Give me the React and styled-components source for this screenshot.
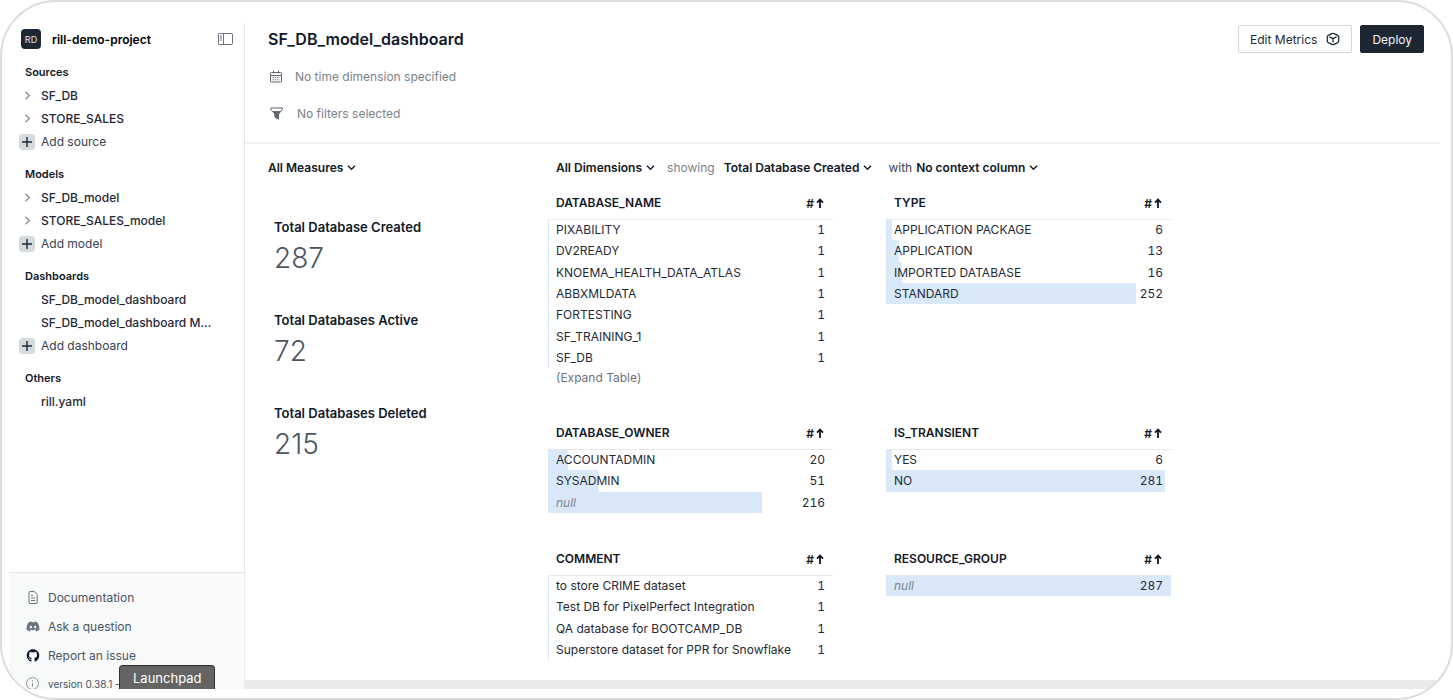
import styled, { createGlobalStyle } from "styled-components";
import { FaDiscord, FaGithub } from "react-icons/fa";

const Palette = {
  Font: `Inter, "Liberation Sans", sans-serif`,
  Ink: "#111827",
  Text: "#1f2937",
  Muted: "#4b5563",
  Faint: "#7b828d",
  Line: "#e5e7eb",
  Bar: "#dae9fa",
  Dark: "#1d2733",
};

const GlobalStyle = createGlobalStyle`
  * {
    box-sizing: border-box;
  }
  body {
    margin: 0;
    background-color: #fff;
    font-family: ${Palette.Font};
    font-size: 12px;
    color: ${Palette.Text};
  }
  button, select {
    font: inherit;
    color: inherit;
    cursor: pointer;
  }
`;

const Frame = styled.div`
  position: relative;
  display: flex;
  min-height: 100vh;
  padding: 21px 11px 9px 7px;
  border: 2px solid #dcdcdc;
  border-radius: 56px;
  overflow: hidden;
`;

const Sidebar = styled.aside`
  display: flex;
  flex-direction: column;
  flex: none;
  width: 236px;
  border-right: 1px solid ${Palette.Line};
`;

const ProjectBar = styled.header`
  display: flex;
  align-items: center;
  height: 32px;
  padding: 0 11px 0 12px;
`;

const ProjectBadge = styled.span`
  display: flex;
  align-items: center;
  justify-content: center;
  width: 20px;
  height: 20px;
  margin-right: 11px;
  border-radius: 4px;
  background-color: ${Palette.Dark};
  color: #e5e7eb;
  font-size: 9px;
`;

const ProjectName = styled.h1`
  flex: 1;
  margin: 0;
  font-size: 12px;
  font-weight: 600;
  color: #000;
`;

const IconButton = styled.button`
  display: flex;
  padding: 0;
  border: none;
  background: none;
`;

const Nav = styled.nav`
  display: flex;
  flex-direction: column;
  flex: 1;
  gap: 10px;
  padding-top: 6px;
`;

const SectionTitle = styled.h2`
  margin: 0;
  padding-left: 16px;
  font-size: 11px;
  line-height: 23px;
  font-weight: 600;
  color: ${Palette.Ink};
`;

const NavList = styled.ul`
  margin: 0;
  padding: 0;
  list-style: none;
`;

const NavItem = styled.li`
  display: flex;
  align-items: center;
  height: 23px;
  padding-left: 10px;
`;

const NavMarker = styled.span`
  display: flex;
  align-items: center;
  justify-content: center;
  flex: none;
  width: 16px;
  height: 16px;
  margin-right: 6px;
  border-radius: 4px;
  color: ${(props) => (props.$boxed ? Palette.Text : "#8b929c")};
  background-color: ${(props) => (props.$boxed ? "#d5dade" : "transparent")};
`;

const NavLink = styled.a`
  white-space: nowrap;
  text-decoration: none;
  font-weight: 500;
  color: ${Palette.Text};
`;

const AddButton = styled.button`
  display: flex;
  align-items: center;
  padding: 0;
  border: none;
  background: none;
  color: #374151;
`;

const SidebarFooter = styled.footer`
  display: flex;
  flex-direction: column;
  height: 117px;
  padding-top: 10px;
  overflow: hidden;
  border-top: 1px solid ${Palette.Line};
  background-color: #f8f9f9;
`;

const FooterLink = styled.a`
  display: flex;
  align-items: center;
  flex: none;
  gap: 8px;
  height: 29px;
  padding-left: 17px;
  text-decoration: none;
  color: ${Palette.Muted};

  svg {
    width: 14px;
    height: 13px;
  }
`;

const Version = styled.p`
  display: flex;
  align-items: center;
  flex: none;
  gap: 9px;
  height: 27px;
  margin: 0;
  padding-left: 17px;
  font-size: 10px;
  color: ${Palette.Muted};
`;

const DockTooltip = styled.div`
  position: absolute;
  left: 117px;
  bottom: 9px;
  height: 24px;
  padding: 0 13px;
  border: 1px solid #2f2f2f;
  border-bottom: none;
  border-radius: 4px 4px 0 0;
  background-color: #646464;
  color: #fff;
  font-size: 13px;
  line-height: 25px;
`;

const Main = styled.main`
  display: flex;
  flex-direction: column;
  flex: 1;
  border-bottom: 9px solid #e9eaeb;
`;

const PageHeader = styled.header`
  padding: 0 16px 10px 23px;
  border-bottom: 2px solid #f0f0f1;
`;

const TitleRow = styled.div`
  display: flex;
  align-items: center;
  justify-content: space-between;
  height: 32px;
  margin-bottom: 3px;
`;

const PageTitle = styled.h2`
  margin: 0;
  font-size: 16px;
  font-weight: 600;
  color: ${Palette.Ink};
`;

const Actions = styled.div`
  display: flex;
  gap: 8px;
`;

const ActionButton = styled.button`
  display: flex;
  align-items: center;
  gap: 9px;
  height: 28px;
  padding: 0 11px;
  border: 1px solid ${(props) => (props.$primary ? Palette.Dark : "#d1d5db")};
  border-radius: 2px;
  background-color: ${(props) => (props.$primary ? Palette.Dark : "#fff")};
  color: ${(props) => (props.$primary ? "#f3f4f6" : Palette.Text)};
`;

const StatusRow = styled.div`
  display: flex;
  align-items: center;
  gap: 12px;
  height: 37px;
  padding-left: 1px;
  color: ${Palette.Faint};
`;

const Content = styled.div`
  display: flex;
  padding-left: 23px;
`;

const Measures = styled.section`
  flex: none;
  width: 280px;
`;

const Toolbar = styled.div`
  display: flex;
  align-items: center;
  height: 43px;
  padding: 4px 0 0 ${(props) => (props.$indent ? "8px" : "0")};
`;

const Picker = styled.label`
  display: flex;
  align-items: center;
  gap: 4px;
  margin-right: ${(props) => (props.$muted ? "16px" : "12px")};
  color: ${(props) => (props.$muted ? Palette.Faint : "#374151")};

  svg {
    color: ${Palette.Ink};
  }
`;

const PickerSelect = styled.select`
  appearance: none;
  field-sizing: content;
  padding: 0;
  margin-left: ${(props) => (props.$spaced ? "5px" : "0")};
  border: none;
  background: none;
  font-weight: 600;
  color: ${Palette.Ink};
`;

const MeasureList = styled.dl`
  margin: 0;
  padding: 28px 0 0 6px;
`;

const Measure = styled.div`
  height: 93px;
`;

const MeasureName = styled.dt`
  font-size: 13px;
  line-height: 24px;
  font-weight: 600;
  color: ${Palette.Ink};
`;

const MeasureValue = styled.dd`
  margin: 0;
  font-size: 28px;
  line-height: 38px;
  font-weight: 300;
  color: ${Palette.Muted};
`;

const Leaderboards = styled.div`
  display: grid;
  grid-template-columns: 285px 285px;
  align-items: start;
  gap: 30px 53px;
`;

const Table = styled.table`
  width: 100%;
  table-layout: fixed;
  border-collapse: collapse;
`;

const HeadCell = styled.th`
  width: ${(props) => (props.$right ? "44px" : "auto")};
  height: 32px;
  padding: 0 9px 0 8px;
  border-bottom: 1px solid ${Palette.Line};
  text-align: ${(props) => (props.$right ? "right" : "left")};
  font-weight: 600;
  color: ${Palette.Ink};
`;

const SortButton = styled.button`
  display: inline-flex;
  align-items: center;
  gap: 2px;
  padding: 0;
  border: none;
  background: none;
  vertical-align: middle;
`;

const BarRow = styled.tr`
  height: 21px;
  background-image: linear-gradient(${Palette.Bar}, ${Palette.Bar});
  background-repeat: no-repeat;

  &:nth-child(3n + 2) {
    height: 22px;
  }
`;

const Cell = styled.td`
  padding: 0 8px;
  line-height: 16px;
  white-space: nowrap;
  text-align: ${(props) => (props.$right ? "right" : "left")};
  font-variant-numeric: ${(props) => (props.$right ? "tabular-nums" : "normal")};
  font-style: ${(props) => (props.$empty ? "italic" : "normal")};
  color: ${(props) => (props.$empty ? Palette.Faint : Palette.Text)};
`;

const ExpandButton = styled.button`
  display: block;
  padding: 0 8px;
  border: none;
  background: none;
  line-height: 19px;
  color: #6b7280;
`;

const TOTAL = 287;

const sections = [
  { title: "Sources", items: ["SF_DB", "STORE_SALES"], expandable: true, add: "Add source" },
  { title: "Models", items: ["SF_DB_model", "STORE_SALES_model"], expandable: true, add: "Add model" },
  {
    title: "Dashboards",
    items: ["SF_DB_model_dashboard", "SF_DB_model_dashboard M..."],
    add: "Add dashboard",
  },
  { title: "Others", items: ["rill.yaml"] },
];

const measures = [
  { name: "Total Database Created", value: 287 },
  { name: "Total Databases Active", value: 72 },
  { name: "Total Databases Deleted", value: 215 },
];

const leaderboards = [
  {
    name: "DATABASE_NAME",
    expandable: true,
    rows: [
      ["PIXABILITY", 1],
      ["DV2READY", 1],
      ["KNOEMA_HEALTH_DATA_ATLAS", 1],
      ["ABBXMLDATA", 1],
      ["FORTESTING", 1],
      ["SF_TRAINING_1", 1],
      ["SF_DB", 1],
    ],
  },
  {
    name: "TYPE",
    rows: [
      ["APPLICATION PACKAGE", 6],
      ["APPLICATION", 13],
      ["IMPORTED DATABASE", 16],
      ["STANDARD", 252],
    ],
  },
  {
    name: "DATABASE_OWNER",
    rows: [
      ["ACCOUNTADMIN", 20],
      ["SYSADMIN", 51],
      [null, 216],
    ],
  },
  {
    name: "IS_TRANSIENT",
    rows: [
      ["YES", 6],
      ["NO", 281],
    ],
  },
  {
    name: "COMMENT",
    rows: [
      ["to store CRIME dataset", 1],
      ["Test DB for PixelPerfect Integration", 1],
      ["QA database for BOOTCAMP_DB", 1],
      ["Superstore dataset for PPR for Snowflake", 1],
    ],
  },
  { name: "RESOURCE_GROUP", rows: [[null, 287]] },
];

function Chevron({ right }) {
  return (
    <svg width="9" height="9" viewBox="0 0 9 9" fill="none" stroke="currentColor" strokeWidth="1.4">
      <path d={right ? "M2.5 0.8 6.3 4.5 2.5 8.2" : "M1 2.8 4.5 6.2 8 2.8"} />
    </svg>
  );
}

function PlusIcon() {
  return (
    <svg width="10" height="10" viewBox="0 0 10 10" stroke="currentColor" strokeWidth="1.4">
      <path d="M5 0v10M0 5h10" />
    </svg>
  );
}

function PanelIcon() {
  return (
    <svg width="15" height="12" viewBox="0 0 15 12" fill="none" stroke="#6b7280">
      <rect x="0.5" y="0.5" width="14" height="11" rx="0.8" />
      <path d="M5.5 0.5v11M2 3h2M2 5h2M2 7h2" />
    </svg>
  );
}

function CalendarIcon() {
  return (
    <svg width="14" height="13" viewBox="0 0 14 13" fill="none" stroke="#5f6670">
      <rect x="1.5" y="2.5" width="11" height="9.5" rx="1" />
      <path d="M1.5 5.5h11M4.5 0.5v3M9.5 0.5v3" />
      <path d="M3.5 7.5h7M3.5 9.8h7" strokeDasharray="1.4 0.9" />
    </svg>
  );
}

function FilterIcon() {
  return (
    <svg width="16" height="13" viewBox="0 0 16 13" fill="none" stroke="#5f6670">
      <path d="M1.8 1h11.6v1.4L9.5 7v5L6 10V7L1.8 2.4z" />
      <path d="M4 4.6h7.2L9.5 7v5L6 10V7z" fill="#5f6670" />
    </svg>
  );
}

function MetricsIcon() {
  return (
    <svg width="14" height="14" viewBox="0 0 14 14" fill="none" stroke="currentColor" strokeWidth="1.3" strokeLinejoin="round">
      <path d="M5.9 1.7q1.1-.5 2.2 0l3.6 1.7q1 .5 1 1.6v4q0 1.1-1 1.6l-3.6 1.7q-1.1.5-2.2 0l-3.6-1.7q-1-.5-1-1.6V5q0-1.1 1-1.6z" />
      <path d="M3.4 4.9 7 6.7l3.6-1.8M7 6.7v3.8" />
    </svg>
  );
}

function DocIcon() {
  return (
    <svg viewBox="0 0 13 13" fill="none" stroke="#6b7280">
      <path d="M2.5 1.5q0-1 1-1h4.2l3 3v8q0 1-1 1H3.5q-1 0-1-1z" />
      <path d="M4.5 4.5h2M4.5 7h4.2M4.5 9.5h4.2" />
    </svg>
  );
}

function InfoIcon() {
  return (
    <svg width="13" height="13" viewBox="0 0 13 13" fill="none" stroke="#8b929c">
      <circle cx="6.5" cy="6.5" r="6" />
      <path d="M6.5 5.8v4M6.5 3.2v1.3" />
    </svg>
  );
}

function SortArrow() {
  return (
    <svg width="8" height="10" viewBox="0 0 8 10" fill="none" stroke="currentColor" strokeWidth="1.8">
      <path d="M4 10V1.6M1 4.6l3-3 3 3" />
    </svg>
  );
}

function Section({ section }) {
  return (
    <section>
      <SectionTitle>{section.title}</SectionTitle>
      <NavList>
        {section.items.map((item) => (
          <NavItem key={item}>
            <NavMarker>{section.expandable && <Chevron right />}</NavMarker>
            <NavLink href="#">{item}</NavLink>
          </NavItem>
        ))}
        {section.add && (
          <NavItem>
            <AddButton>
              <NavMarker $boxed>
                <PlusIcon />
              </NavMarker>
              {section.add}
            </AddButton>
          </NavItem>
        )}
      </NavList>
    </section>
  );
}

function Leaderboard({ board }) {
  return (
    <section>
      <Table>
        <thead>
          <tr>
            <HeadCell>{board.name}</HeadCell>
            <HeadCell $right>
              <SortButton aria-label="Sort ascending">
                # <SortArrow />
              </SortButton>
            </HeadCell>
          </tr>
        </thead>
        <tbody>
          {board.rows.map(([label, value]) => (
            <BarRow key={label} style={{ backgroundSize: `${(value / TOTAL) * 100}% 100%` }}>
              <Cell $empty={label === null}>{label === null ? "null" : label}</Cell>
              <Cell $right>{value}</Cell>
            </BarRow>
          ))}
        </tbody>
      </Table>
      {board.expandable && <ExpandButton>(Expand Table)</ExpandButton>}
    </section>
  );
}

function App() {
  return (
    <Frame>
      <GlobalStyle />
      <Sidebar>
        <ProjectBar>
          <ProjectBadge>RD</ProjectBadge>
          <ProjectName>rill-demo-project</ProjectName>
          <IconButton aria-label="Close sidebar">
            <PanelIcon />
          </IconButton>
        </ProjectBar>
        <Nav>
          {sections.map((section) => (
            <Section key={section.title} section={section} />
          ))}
        </Nav>
        <SidebarFooter>
          <FooterLink href="#">
            <DocIcon />
            Documentation
          </FooterLink>
          <FooterLink href="#">
            <FaDiscord color="#6b7280" />
            Ask a question
          </FooterLink>
          <FooterLink href="#">
            <FaGithub color={Palette.Ink} />
            Report an issue
          </FooterLink>
          <Version>
            <InfoIcon />
            version 0.38.1 –
          </Version>
        </SidebarFooter>
      </Sidebar>
      <Main>
        <PageHeader>
          <TitleRow>
            <PageTitle>SF_DB_model_dashboard</PageTitle>
            <Actions>
              <ActionButton>
                Edit Metrics
                <MetricsIcon />
              </ActionButton>
              <ActionButton $primary>Deploy</ActionButton>
            </Actions>
          </TitleRow>
          <StatusRow>
            <CalendarIcon />
            No time dimension specified
          </StatusRow>
          <StatusRow>
            <FilterIcon />
            No filters selected
          </StatusRow>
        </PageHeader>
        <Content>
          <Measures>
            <Toolbar>
              <Picker>
                <PickerSelect aria-label="Measures">
                  <option>All Measures</option>
                </PickerSelect>
                <Chevron />
              </Picker>
            </Toolbar>
            <MeasureList>
              {measures.map((measure) => (
                <Measure key={measure.name}>
                  <MeasureName>{measure.name}</MeasureName>
                  <MeasureValue>{measure.value}</MeasureValue>
                </Measure>
              ))}
            </MeasureList>
          </Measures>
          <section>
            <Toolbar $indent>
              <Picker>
                <PickerSelect aria-label="Dimensions">
                  <option>All Dimensions</option>
                </PickerSelect>
                <Chevron />
              </Picker>
              <Picker $muted>
                showing
                <PickerSelect $spaced>
                  <option>Total Database Created</option>
                </PickerSelect>
                <Chevron />
              </Picker>
              <Picker>
                with
                <PickerSelect>
                  <option>No context column</option>
                </PickerSelect>
                <Chevron />
              </Picker>
            </Toolbar>
            <Leaderboards>
              {leaderboards.map((board) => (
                <Leaderboard key={board.name} board={board} />
              ))}
            </Leaderboards>
          </section>
        </Content>
      </Main>
      <DockTooltip role="tooltip">Launchpad</DockTooltip>
    </Frame>
  );
}

export default App;
